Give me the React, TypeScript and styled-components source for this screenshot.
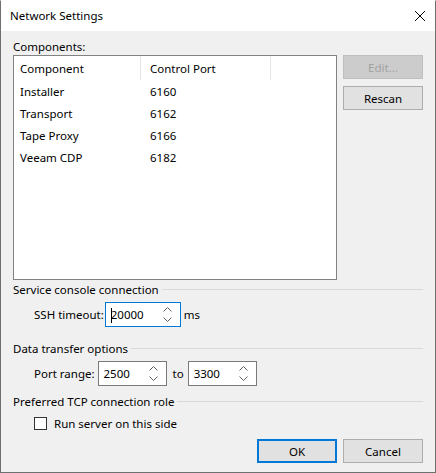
import React from 'react'
import styled, { createGlobalStyle } from 'styled-components'

const GlobalStyle = createGlobalStyle`
  html, body {
    margin: 0;
    padding: 0;
    background: #ffffff;
  }
  * {
    box-sizing: border-box;
  }
`

const Window = styled.div`
  width: 436px;
  height: 473px;
  display: flex;
  flex-direction: column;
  border: 1px solid #6f6f6f;
  border-top-color: #ffffff;
  background: #f0f0f0;
  font-family: 'Noto Sans', 'Segoe UI', sans-serif;
  font-size: 11.5px;
  color: #000000;
  overflow: hidden;
`

const TitleBar = styled.div`
  height: 30px;
  flex: none;
  display: flex;
  align-items: center;
  justify-content: space-between;
  padding: 0 9px 0 9px;
  background: #ffffff;
`

const TitleText = styled.span`
  font-size: 11.5px;
  padding-bottom: 1px;
`

const CloseButton = styled.div`
  width: 12px;
  height: 12px;
  display: flex;
`

const Body = styled.div`
  flex: 1;
  display: flex;
  flex-direction: column;
  padding: 8px 12px 0 12px;
`

const Label = styled.div`
  height: 16px;
  line-height: 16px;
`

const TopRow = styled.div`
  display: flex;
  gap: 6px;
  align-items: flex-start;
`

const ListBox = styled.div`
  width: 324px;
  height: 225px;
  border: 1px solid #828282;
  background: #ffffff;
  display: flex;
  flex-direction: column;
`

const ListRow = styled.div<{ $header?: boolean }>`
  display: grid;
  grid-template-columns: 127px 130px 1fr;
  height: ${(p) => (p.$header ? '24px' : '22px')};
  align-items: stretch;
`

const Cell = styled.div<{ $header?: boolean; $indent?: number }>`
  display: flex;
  align-items: center;
  padding-left: ${(p) => p.$indent ?? 6}px;
  border-right: ${(p) => (p.$header ? '1px solid #e5e5e5' : 'none')};
  &:last-child {
    border-right: none;
  }
`

const ButtonColumn = styled.div`
  display: flex;
  flex-direction: column;
  gap: 7px;
`

const Button = styled.button<{ $disabled?: boolean; $default?: boolean }>`
  width: 80px;
  height: 24px;
  padding: 0;
  font-family: inherit;
  font-size: 11.5px;
  color: ${(p) => (p.$disabled ? '#a2a2a2' : '#000000')};
  background: ${(p) => (p.$disabled ? '#cccccc' : '#e1e1e1')};
  border: ${(p) =>
    p.$default ? '2px solid #0078d7' : p.$disabled ? '1px solid #bfbfbf' : '1px solid #adadad'};
  display: flex;
  align-items: center;
  justify-content: center;
`

const SectionHeader = styled.div<{ $top: number }>`
  display: flex;
  align-items: center;
  gap: 3px;
  height: 16px;
  margin-top: ${(p) => p.$top}px;
`

const SectionLine = styled.div`
  flex: 1;
  height: 1px;
  background: #d9d9d9;
  margin-top: 1px;
`

const FieldRow = styled.div<{ $top: number }>`
  display: flex;
  align-items: center;
  padding-left: 21px;
  margin-top: ${(p) => p.$top}px;
`

const FieldText = styled.span<{ $left?: number; $right?: number }>`
  margin-left: ${(p) => p.$left ?? 0}px;
  margin-right: ${(p) => p.$right ?? 0}px;
`

const SpinBox = styled.div<{ $width: number; $focused?: boolean }>`
  width: ${(p) => p.$width}px;
  height: 25px;
  background: #ffffff;
  border: 1px solid ${(p) => (p.$focused ? '#0078d7' : '#7a7a7a')};
  display: flex;
  align-items: center;
  padding-left: 5px;
`

const SpinValue = styled.span`
  flex: 1;
  position: relative;
`

const Caret = styled.span`
  position: absolute;
  left: 0;
  top: 1px;
  width: 1px;
  height: 15px;
  background: #000000;
`

const SpinArrows = styled.div`
  width: 18px;
  display: flex;
  flex-direction: column;
  align-items: center;
  gap: 5px;
  margin-right: 3px;
`

const CheckRow = styled.label`
  display: flex;
  align-items: center;
  gap: 7px;
  padding-left: 21px;
  margin-top: 6px;
  height: 16px;
`

const CheckBox = styled.span`
  width: 13px;
  height: 13px;
  border: 1px solid #333333;
  background: #ffffff;
`

const Footer = styled.div`
  display: flex;
  justify-content: flex-end;
  gap: 6px;
  margin-top: 8px;
`

const Chevron = ({ up }: { up?: boolean }) => (
  <svg width="9" height="5" viewBox="0 0 9 5">
    <path
      d={up ? 'M0.5 4.5 L4.5 0.5 L8.5 4.5' : 'M0.5 0.5 L4.5 4.5 L8.5 0.5'}
      fill="none"
      stroke="#606060"
      strokeWidth="1"
    />
  </svg>
)

const Spinner = ({ value, width, focused }: { value: string; width: number; focused?: boolean }) => (
  <SpinBox $width={width} $focused={focused}>
    <SpinValue>
      {focused && <Caret />}
      {value}
    </SpinValue>
    <SpinArrows>
      <Chevron up />
      <Chevron />
    </SpinArrows>
  </SpinBox>
)

const components = [
  { name: 'Installer', port: '6160' },
  { name: 'Transport', port: '6162' },
  { name: 'Tape Proxy', port: '6166' },
  { name: 'Veeam CDP', port: '6182' },
]

const Section = ({ title, top }: { title: string; top: number }) => (
  <SectionHeader $top={top}>
    <span>{title}</span>
    <SectionLine />
  </SectionHeader>
)

const App = () => {
  return (
    <>
      <GlobalStyle />
      <Window>
        <TitleBar>
          <TitleText>Network Settings</TitleText>
          <CloseButton>
            <svg width="12" height="12" viewBox="0 0 12 12">
              <path d="M1 1 L11 11 M11 1 L1 11" stroke="#000000" strokeWidth="1" fill="none" />
            </svg>
          </CloseButton>
        </TitleBar>
        <Body>
          <Label>Components:</Label>
          <TopRow>
            <ListBox>
              <ListRow $header>
                <Cell $header>Component</Cell>
                <Cell $header $indent={9}>Control Port</Cell>
                <Cell />
              </ListRow>
              {components.map((c) => (
                <ListRow key={c.name}>
                  <Cell>{c.name}</Cell>
                  <Cell $indent={9}>{c.port}</Cell>
                  <Cell />
                </ListRow>
              ))}
            </ListBox>
            <ButtonColumn>
              <Button $disabled>Edit...</Button>
              <Button>Rescan</Button>
            </ButtonColumn>
          </TopRow>
          <Section title="Service console connection" top={1} />
          <FieldRow $top={5}>
            <FieldText $right={1}>SSH timeout:</FieldText>
            <Spinner value="20000" width={76} focused />
            <FieldText $left={3}>ms</FieldText>
          </FieldRow>
          <Section title="Data transfer options" top={13} />
          <FieldRow $top={5}>
            <FieldText $right={3}>Port range:</FieldText>
            <Spinner value="2500" width={69} />
            <FieldText $left={6} $right={4}>to</FieldText>
            <Spinner value="3300" width={69} />
          </FieldRow>
          <Section title="Preferred TCP connection role" top={7} />
          <CheckRow>
            <CheckBox />
            <span>Run server on this side</span>
          </CheckRow>
          <Footer>
            <Button $default>OK</Button>
            <Button>Cancel</Button>
          </Footer>
        </Body>
      </Window>
    </>
  )
}

export default App
